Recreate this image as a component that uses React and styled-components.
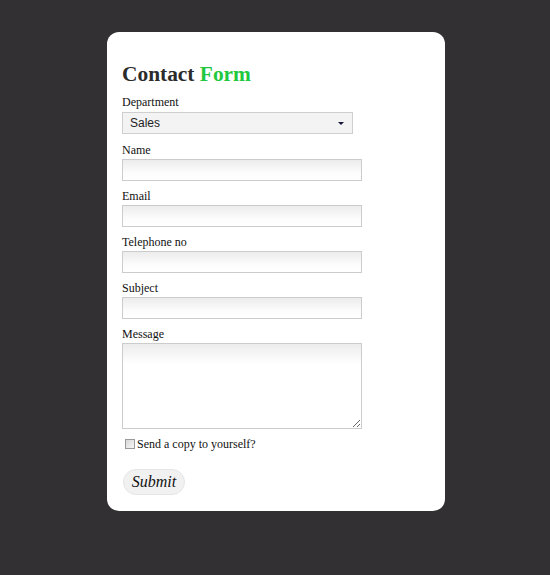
import { createGlobalStyle, styled } from "styled-components";

const GlobalStyle = createGlobalStyle`
    html, body {
        margin: 0;
        padding: 0;
        background-color: #323033;
    }
    body {
        min-height: 575px;
        font-family: "Liberation Serif", "Times New Roman", serif;
    }
`;

const Page = styled.div`
    padding-top: 32px;
    display: flex;
    justify-content: center;
`;

const Card = styled.form`
    width: 308px;
    padding: 29px 15px 16px;
    margin-left: 2px;
    background-color: #ffffff;
    border-radius: 12px;
`;

const Title = styled.h1`
    margin: 0 0 7px;
    font-size: 21.4px;
    line-height: 26px;
    font-weight: bold;
    color: #2b2b2b;

    span {
        color: #1fc83f;
    }
`;

const Field = styled.div`
    display: flex;
    flex-direction: column;
    align-items: flex-start;
    margin-bottom: 7px;
`;

const Label = styled.label`
    display: block;
    font-size: 12px;
    line-height: 16px;
    color: #111;
    margin-bottom: ${props => props.$gap || 1}px;
`;

const SelectWrap = styled.div`
    position: relative;
    width: 231px;
    margin-bottom: 1px;
`;

const Select = styled.select`
    appearance: none;
    display: block;
    width: 231px;
    height: 22px;
    margin: 0;
    padding: 0 0 0 7px;
    border: 1px solid #cfcfcf;
    border-radius: 0;
    background-color: #f3f3f3;
    font-family: "Liberation Sans", Arial, sans-serif;
    font-size: 12px;
    color: #222;
`;

const Arrow = styled.span`
    position: absolute;
    right: 9px;
    top: 10px;
    width: 0;
    height: 0;
    border-left: 3px solid transparent;
    border-right: 3px solid transparent;
    border-top: 3px solid #15153a;
    pointer-events: none;
`;

const TextInput = styled.input`
    display: block;
    box-sizing: border-box;
    width: 240px;
    height: 22px;
    margin: 0;
    padding: 0 4px;
    border: 1px solid #cccccc;
    background: linear-gradient(#ececec, #fbfbfb 60%, #ffffff);
    font-family: "Liberation Serif", serif;
    font-size: 12px;
    outline: none;
`;

const TextArea = styled.textarea`
    display: block;
    box-sizing: border-box;
    width: 240px;
    height: 86px;
    margin: 0;
    padding: 3px 4px;
    border: 1px solid #cccccc;
    background: linear-gradient(#ececec, #ffffff 20px);
    font-family: "Liberation Serif", serif;
    font-size: 12px;
    outline: none;
`;

const CheckRow = styled.label`
    display: flex;
    align-items: center;
    gap: 2px;
    margin: 0 0 17px 3px;
    font-size: 12px;
    line-height: 16px;
    color: #111;
`;

const Check = styled.input`
    appearance: none;
    width: 10px;
    height: 10px;
    margin: 0;
    border: 1px solid #9a9a9a;
    background: linear-gradient(135deg, #d8d8d8, #f6f6f6);
    box-sizing: border-box;
`;

const SubmitButton = styled.button`
    display: block;
    margin-left: 1px;
    width: 62px;
    height: 26px;
    padding: 0;
    border: 1px solid #e6e6e6;
    border-radius: 13px;
    background-color: #f1f1f1;
    font-family: "Liberation Serif", Georgia, serif;
    font-style: italic;
    font-size: 16px;
    color: #111;
`;

const fields = ["Name", "Email", "Telephone no", "Subject"];

function App() {
    return (
        <>
            <GlobalStyle />
            <Page>
                <Card onSubmit={e => e.preventDefault()}>
                    <Title>Contact <span>Form</span></Title>

                    <Field>
                        <Label $gap={2}>Department</Label>
                        <SelectWrap>
                            <Select defaultValue="Sales">
                                <option>Sales</option>
                                <option>Support</option>
                                <option>Billing</option>
                            </Select>
                            <Arrow />
                        </SelectWrap>
                    </Field>

                    {fields.map(f => (
                        <Field key={f}>
                            <Label>{f}</Label>
                            <TextInput type="text" />
                        </Field>
                    ))}

                    <Field>
                        <Label>Message</Label>
                        <TextArea />
                    </Field>

                    <CheckRow>
                        <Check type="checkbox" />
                        Send a copy to yourself?
                    </CheckRow>

                    <SubmitButton type="submit">Submit</SubmitButton>
                </Card>
            </Page>
        </>
    );
}

export default App;
